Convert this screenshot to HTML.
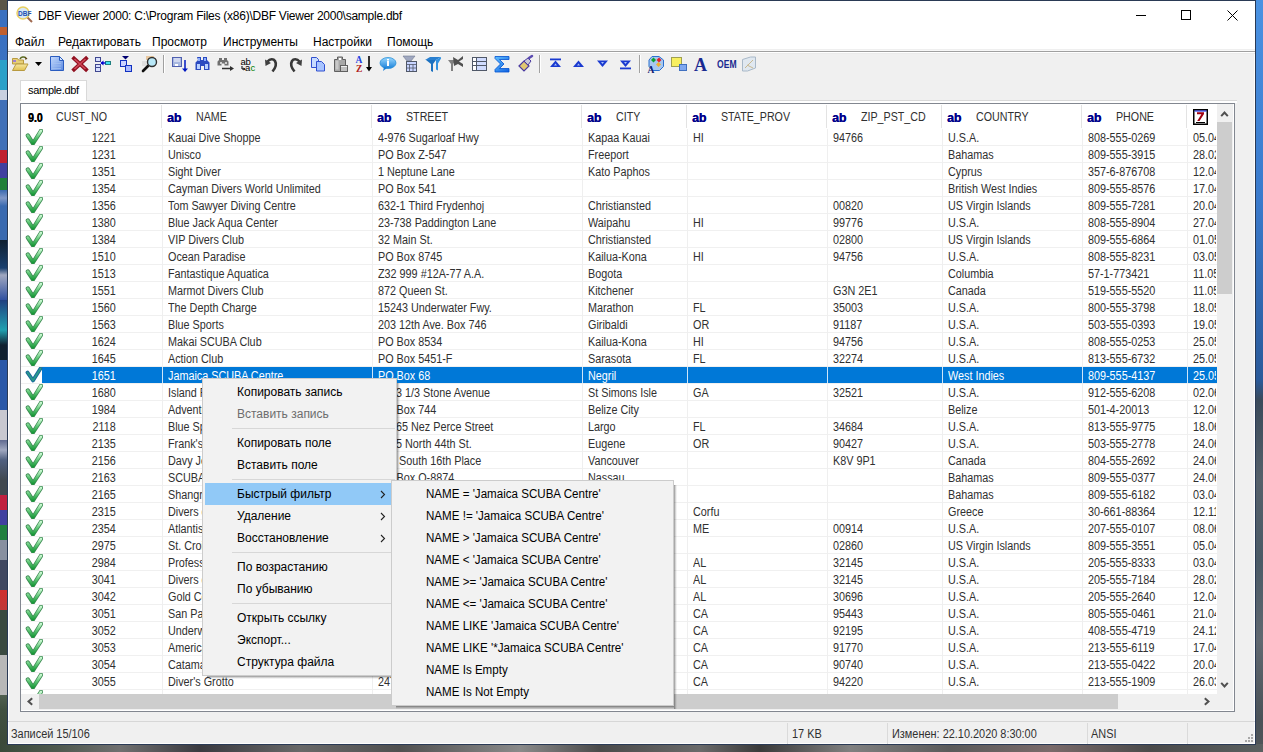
<!DOCTYPE html><html><head><meta charset="utf-8"><style>
*{box-sizing:border-box}
body{margin:0;width:1263px;height:752px;overflow:hidden;position:relative;background:#2d3035;font-family:"Liberation Sans",sans-serif;color:#000}
.a{position:absolute}
.t{position:absolute;white-space:nowrap}
.ic{position:absolute;width:16px;height:16px}
.dt{position:absolute;white-space:nowrap;font-size:12px;line-height:16px;overflow:hidden;height:16px}
.dt span{display:inline-block;transform:scaleX(0.9);transform-origin:0 0}
.dt.r span{transform-origin:100% 0}
.hd{position:absolute;white-space:nowrap;font-size:12px;line-height:16px;color:#303030;transform:scaleX(0.89);transform-origin:0 0}
.ab{position:absolute;font-weight:bold;font-size:12.5px;line-height:16px;color:#00008b;letter-spacing:-0.2px;text-shadow:0.35px 0 0 currentColor}
.mi{position:absolute;white-space:nowrap;font-size:11.5px;line-height:22px;color:#000}
</style></head><body><svg width="0" height="0" style="position:absolute"><defs><linearGradient id="gck" x1="0" y1="0" x2="0" y2="1"><stop offset="0" stop-color="#c8f8d0"/><stop offset="0.5" stop-color="#60c878"/><stop offset="1" stop-color="#189838"/></linearGradient><g id="ck"><path d="M2.8 6.5L8 14.5L16 1.8" fill="none" stroke="#3a8850" stroke-width="4.2" stroke-linejoin="round" stroke-linecap="round"/><path d="M2.8 6.5L8 14.5L16 1.8" fill="none" stroke="url(#gck)" stroke-width="2.6" stroke-linejoin="round" stroke-linecap="round"/></g><g id="cks"><path d="M2.5 5.5L8 13.5L15.5 1.5" fill="none" stroke="#1a6a9a" stroke-width="3.8" stroke-linejoin="round" stroke-linecap="round"/><path d="M2.5 5.5L8 13.5L15.5 1.5" fill="none" stroke="#2a9a8a" stroke-width="1.8" stroke-linejoin="round" stroke-linecap="round"/></g></defs></svg><div class="a" style="left:0;top:0;width:8px;height:752px;background:linear-gradient(#5a5548 0,#5a5548 10px,#3a70c0 10px,#3a70c0 27px,#c06030 27px,#c06030 35px,#3a70c0 35px,#3a72c2 60px,#2aa0c8 60px,#2aa0c8 90px,#c8d0e0 90px,#c8d0e0 100px,#4070b8 100px,#4070b8 150px,#c02030 150px,#c02030 163px,#4040a0 163px,#4040a0 178px,#20803a 178px,#20803a 190px,#3a6ab0 190px,#8098c8 198px,#3a6ab0 206px,#3a6ab0 240px,#102030 240px,#1a4070 268px,#a0a8c0 275px,#3050a0 300px,#204080 300px,#20a0b0 330px,#102030 345px,#102030 360px,#2a58a8 360px,#2a58a8 410px,#c8c8d0 410px,#c8c8d0 440px,#606a90 440px,#a0a8c0 450px,#506080 460px,#404850 480px,#404850 495px,#c02040 495px,#c02040 510px,#4040a0 510px,#4040a0 525px,#208040 525px,#208040 540px,#8890a0 540px,#8890a0 560px,#404860 560px,#404860 590px,#d03030 590px,#c03838 610px,#3a4a40 610px,#3a4a40 655px,#b8b8b8 655px,#b8b8b8 695px,#506050 695px,#405040 710px,#3a4838 752px)"></div><div class="a" style="left:1255px;top:0;width:8px;height:752px;background:linear-gradient(#4a92e2 0,#3a7acc 200px,#2a5a9a 380px,#3a4a5a 400px,#55606a 480px,#4a5a66 560px,#606870 640px,#4a5258 720px,#505558 752px)"></div><div class="a" style="left:0;top:744px;width:1263px;height:8px;background:linear-gradient(90deg,#3a4a3a 0,#505a50 60px,#707070 120px,#3a3a40 200px,#686868 300px,#505050 400px,#8a8a8a 520px,#4a4a4a 600px,#6a6a6a 700px,#3a3a3a 760px,#808080 850px,#5a5a5a 950px,#7a6a6a 1050px,#4a4a4a 1150px,#5a6060 1263px)"></div><div class="a" style="left:7px;top:0;width:1249px;height:745px;background:#2a3a55"></div><div class="a" style="left:8px;top:1px;width:1247px;height:743px;background:#f0f0f0"></div><div class="a" style="left:8px;top:1px;width:1247px;height:743px;border:1px solid #fdfdfd;border-top:none"></div><div class="a" style="left:8px;top:1px;width:1247px;height:48px;background:#fff"></div><div class="a" style="left:8px;top:49px;width:1247px;height:1px;background:#efefef"></div><div class="a" style="left:8px;top:50px;width:1247px;height:1px;background:#f8f8f8"></div><div class="a" style="left:8px;top:51px;width:1247px;height:1px;background:#a0a0a0"></div><div class="a" style="left:8px;top:52px;width:1247px;height:1px;background:#ffffff"></div><div class="a" style="left:8px;top:53px;width:1247px;height:1px;background:#ebebeb"></div><div class="t" style="left:38px;top:8px;font-size:12px;line-height:16px;letter-spacing:-0.25px">DBF Viewer 2000: C:\Program Files (x86)\DBF Viewer 2000\sample.dbf</div><svg class="a" style="left:16px;top:6px" width="18" height="18" viewBox="0 0 18 18"><line x1="10" y1="10" x2="16" y2="16" stroke="#a06a50" stroke-width="2"/><circle cx="7" cy="7" r="6" fill="#d8e8f8" stroke="#e8d060" stroke-width="1.5"/><text x="2" y="10" font-size="6.5" font-weight="bold" fill="#2050b0" font-family="Liberation Sans">DBF</text></svg><div class="a" style="left:1136px;top:15px;width:10px;height:1px;background:#000"></div><div class="a" style="left:1181px;top:10px;width:10px;height:10px;border:1px solid #000"></div><svg class="a" style="left:1227px;top:10px" width="11" height="11" viewBox="0 0 11 11"><path d="M0.5 0.5L10.5 10.5M10.5 0.5L0.5 10.5" stroke="#000" stroke-width="1"/></svg><div class="t" style="left:15px;top:34px;font-size:12px;line-height:16px">Файл</div><div class="t" style="left:58px;top:34px;font-size:12px;line-height:16px">Редактировать</div><div class="t" style="left:152px;top:34px;font-size:12px;line-height:16px">Просмотр</div><div class="t" style="left:223px;top:34px;font-size:12px;line-height:16px">Инструменты</div><div class="t" style="left:313px;top:34px;font-size:12px;line-height:16px">Настройки</div><div class="t" style="left:387px;top:34px;font-size:12px;line-height:16px">Помощь</div><svg class="a" style="left:0;top:0" width="800" height="80" viewBox="0 0 800 80"><defs><linearGradient id="gy" x1="0" y1="0" x2="0" y2="1"><stop offset="0" stop-color="#f6e7a0"/><stop offset="1" stop-color="#e0c050"/></linearGradient><linearGradient id="gb" x1="0" y1="0" x2="1" y2="1"><stop offset="0" stop-color="#c8dcff"/><stop offset="1" stop-color="#5a88e0"/></linearGradient><linearGradient id="gbl" x1="0" y1="0" x2="0" y2="1"><stop offset="0" stop-color="#9ad8ff"/><stop offset="1" stop-color="#1a80d8"/></linearGradient><linearGradient id="gsig" x1="0" y1="0" x2="1" y2="1"><stop offset="0" stop-color="#60c0ff"/><stop offset="1" stop-color="#1060e0"/></linearGradient></defs><path d="M12.5 58.5h5l1 1.5h5v4h-11z" fill="#e6cf78" stroke="#b89a40" stroke-width="1"/><path d="M12.5 70.5l3.5-6.5h12l-3.5 6.5z" fill="url(#gy)" stroke="#b89a40" stroke-width="1"/><rect x="13" y="60" width="3" height="2" fill="#a080d0"/><path d="M20 59c1-2 4-3 6-1" fill="none" stroke="#5a6a20" stroke-width="1.5"/><path d="M25 57l2.5 1.5l-2 1.5z" fill="#5a4010"/><path d="M35 62h7l-3.5 4z" fill="#000"/><path d="M50.5 56.5h9l4 4v10h-13z" fill="url(#gb)" stroke="#2a5cc0" stroke-width="1"/><path d="M52 61h9M52 63.5h9M52 66h9M52 68.5h9" stroke="#a8c4f0" stroke-width="0.7"/><path d="M59.5 56.5v4h4z" fill="#d8e8ff" stroke="#2a5cc0" stroke-width="1"/><path d="M74 58.5L86 69.5M86 58.5L74 69.5" stroke="#901020" stroke-width="3.8" stroke-linecap="square"/><path d="M74.5 59L85.5 69M85.5 59L74.5 69" stroke="#d04858" stroke-width="1.6" stroke-linecap="butt"/><rect x="95.5" y="57.5" width="5" height="4" fill="#d8e0ff" stroke="#404890"/><rect x="95.5" y="64.5" width="5" height="3" fill="#d8e0ff" stroke="#404890"/><rect x="95.5" y="67.5" width="5" height="4" fill="#d8e0ff" stroke="#404890"/><rect x="105.5" y="61.5" width="5" height="3" fill="#40e0f0" stroke="#208080"/><path d="M101 63h4.5" stroke="#0000d0" stroke-width="1.4"/><path d="M100.5 63l3-2.5v5z" fill="#0000d0"/><path d="M122 56h7l-3.5 3.5z" fill="#000070"/><rect x="120.5" y="60.5" width="6" height="6" fill="#c8d0ff" stroke="#1030c0"/><rect x="125.5" y="65.5" width="6" height="6" fill="#a8b8ff" stroke="#1030c0"/><rect x="146" y="56" width="8" height="4" fill="#e8c8a0"/><rect x="142" y="61" width="6" height="5" fill="#e0e0e0"/><path d="M143 71l5-5" stroke="#101010" stroke-width="2.6" stroke-linecap="round"/><circle cx="152" cy="62" r="4.5" fill="#b8e8f8" stroke="#303030" stroke-width="1.4"/><rect x="163" y="55" width="1" height="18" fill="#a0a0a0"/><rect x="164" y="55" width="1" height="18" fill="#ffffff"/><rect x="172.5" y="57.5" width="9" height="9" fill="#a8b8e0" stroke="#5060b0"/><rect x="174" y="58" width="6" height="4" fill="#d0d8f0"/><rect x="175" y="64" width="3" height="2" fill="#fff"/><path d="M185 60v10" stroke="#0018c0" stroke-width="1.5"/><path d="M182 68.5h6l-3 3.5z" fill="#0018c0"/><path d="M197 57h4v3h2v-3h4v3l2.5 2.5v7.5h-5.5v-4h-3v4h-5.5v-7.5l2.5-2.5z" fill="#2a4ac0"/><rect x="197" y="64" width="3" height="5" fill="#b8d0ff"/><rect x="205" y="64" width="3" height="5" fill="#b8d0ff"/><rect x="198" y="58" width="2" height="3" fill="#90b0ff"/><rect x="204" y="58" width="2" height="3" fill="#90b0ff"/><path d="M219 58h3v2h2v-2h3v2l1.5 1.5v4h-4v-2h-3v2h-4v-4l1.5-1.5z" fill="#707070"/><rect x="220" y="62" width="2" height="2" fill="#d0d0d0"/><rect x="225" y="62" width="2" height="2" fill="#d0d0d0"/><path d="M222 68.5h9" stroke="#303030" stroke-width="1.5"/><path d="M230 66l4 2.5l-4 2.5z" fill="#303030"/><text x="240.5" y="64.5" font-family="Liberation Sans" font-size="9.5" fill="#000" letter-spacing="-0.3">ab</text><path d="M242 66v3h2.5" fill="none" stroke="#000" stroke-width="1"/><path d="M243.5 67.5l2 1.5l-2 1.5z" fill="#000"/><text x="245" y="70.8" font-family="Liberation Sans" font-size="9.5" fill="#000">a</text><text x="250.5" y="70.8" font-family="Liberation Sans" font-size="9.5" fill="#008000">c</text><path d="M272.5 71.5c2.5-3 4.5-7 2.5-10.5c-1.5-2.5-5-2.5-7.5 0.5" fill="none" stroke="#383838" stroke-width="2.6"/><path d="M265 59.5l0.5 6.5l5.5-3z" fill="#404040"/><path d="M294.5 71.5c-2.5-3-4.5-7-2.5-10.5c1.5-2.5 5-2.5 7.5 0.5" fill="none" stroke="#383838" stroke-width="2.6"/><path d="M302 59.5l-0.5 6.5l-5.5-3z" fill="#404040"/><path d="M311.5 57.5h5l2 2v8h-7z" fill="#c8dcff" stroke="#3050d0"/><path d="M316.5 61.5h5l3 3v6.5h-8z" fill="#a8c4ff" stroke="#3050d0"/><path d="M334.5 59.5h3v-2.5h5v2.5h3v12h-11z" fill="#a8a8a8" stroke="#606060"/><rect x="339" y="58" width="2" height="2" fill="#fff"/><rect x="335.5" y="60.5" width="3" height="9" fill="#c8c8c8"/><rect x="340.5" y="65.5" width="7" height="6" fill="#f0f0f0" stroke="#606060"/><path d="M341 68h6M341 70h6" stroke="#909090"/><text x="355.5" y="63" font-family="Liberation Serif" font-weight="bold" font-size="9.5" fill="#2040e0">A</text><text x="356" y="71.5" font-family="Liberation Serif" font-weight="bold" font-size="9.5" fill="#b02020">Z</text><path d="M369 56v13" stroke="#000" stroke-width="1.6"/><path d="M366 67h6l-3 4.5z" fill="#000"/><ellipse cx="388" cy="63" rx="8" ry="5.5" fill="url(#gbl)" stroke="#2a90d8" stroke-width="0.8"/><path d="M384 67l-1 4l4-3z" fill="#1a80d8"/><rect x="387" y="61" width="2" height="5" fill="#fff"/><rect x="387" y="59" width="2" height="1.5" fill="#fff"/><path d="M403 56h12l-4 5h-4z" fill="#a0a8c0" stroke="#707890" stroke-width="0.6"/><rect x="406.5" y="61.5" width="10" height="10" fill="#c8d4ff" stroke="#505868"/><path d="M406.5 64.5h10M406.5 68h10M409.5 64.5v7M413 64.5v7" stroke="#505868" stroke-width="0.8"/><path d="M425 60l5-3h11l-5 3z" fill="#2a80d0"/><path d="M426 60h10l-3 4v8l-2-1v-7z" fill="#1a70c0"/><path d="M436 60l5-3v1.5l-3 5v7l-2-1z" fill="#3090e0"/><path d="M448 60h8l-3 4v7h-2v-7z" fill="#808080"/><path d="M453 57l5 3l5-4v3l-4 2.5l4 2.5v3l-5-3l-4 2z" fill="#505050"/><rect x="472.5" y="57.5" width="14" height="13" fill="#d0dcff" stroke="#505868"/><rect x="473" y="58" width="3" height="12" fill="#fff"/><path d="M472.5 61.5h14M472.5 65.5h14M476.5 57.5v13" stroke="#505868"/><path d="M495 56.5h14v3h-9.5l4.5 4.5l-4.5 4.5h9.5v3.5h-14v-2.5l5.5-5.5l-5.5-5.5z" fill="url(#gsig)" stroke="#0050d0" stroke-width="0.8"/><path d="M519 66l5-5l5 5l-5 5z" fill="#e0c870" stroke="#4a3aa0" stroke-width="1.2"/><path d="M524 61l4-3l3 3l-3 4z" fill="#c8c8d8" stroke="#4a3aa0" stroke-width="1"/><path d="M529 58l3-2" stroke="#5a4ab0" stroke-width="2.5" stroke-linecap="round"/><rect x="539" y="55" width="1" height="18" fill="#a0a0a0"/><rect x="540" y="55" width="1" height="18" fill="#ffffff"/><rect x="550" y="58.5" width="11" height="1.8" fill="#1a3ad0"/><path d="M555.5 60.5l-5.5 6.5h11z" fill="#1a3ad0"/><path d="M555.5 63.5l-1.5 2h3z" fill="#a8c0f8"/><path d="M578.5 60.5l-5.5 6.5h11z" fill="#1a3ad0"/><path d="M578.5 63.5l-1.5 2h3z" fill="#a8c0f8"/><path d="M597 60.5h11l-5.5 6.5z" fill="#1a3ad0"/><path d="M601 62h3l-1.5 2z" fill="#a8c0f8"/><path d="M620 60.5h11l-5.5 6.5z" fill="#1a3ad0"/><path d="M624 62h3l-1.5 2z" fill="#a8c0f8"/><rect x="620" y="67.5" width="11" height="1.8" fill="#1a3ad0"/><rect x="639" y="55" width="1" height="18" fill="#a0a0a0"/><rect x="640" y="55" width="1" height="18" fill="#ffffff"/><path d="M652 56.5h7l4.5 3.5v6.5l-4 4h-7l-3.5-4v-6.5z" fill="#a8c8f0" stroke="#2a70d0" stroke-width="1"/><path d="M651 60l2.5-2.5l2.5 2.5l-2.5 2.5z" fill="#10a030"/><path d="M656.5 60l2.5-2.5l2.5 2.5l-2.5 2.5z" fill="#e02030"/><path d="M656 64.5l2.5-2.5l2.5 2.5l-2.5 2.5z" fill="#f0b030"/><text x="647.5" y="72.5" font-family="Liberation Serif" font-weight="bold" font-size="9.5" fill="#101a70">A</text><rect x="671.5" y="57.5" width="10" height="9" fill="#f8f060" stroke="#a0a050"/><rect x="679.5" y="64.5" width="7" height="6" fill="#80a8f0" stroke="#4070c0"/><text x="694" y="71" font-family="Liberation Serif" font-weight="bold" font-size="18" fill="#1a2a90">A</text><text x="717" y="68.5" font-family="Liberation Sans" font-weight="bold" font-size="11" fill="#1a2a90" transform="translate(717 0) scale(0.78 1) translate(-717 0)">OEM</text><path d="M742.5 59.5l8-2.5h5v11l-8 3h-5z" fill="#e0e8f0" stroke="#a8b8c8"/><path d="M745 68l8-8M747 65l6 3" stroke="#c8b890" stroke-width="1"/></svg><div class="a" style="left:20px;top:80px;width:67px;height:22px;background:#fff;border:1px solid #d9d9d9;border-bottom:none"></div><div class="t" style="left:28px;top:82px;font-size:11px;line-height:16px;letter-spacing:-0.3px">sample.dbf</div><div class="a" style="left:87px;top:100px;width:1150px;height:1px;background:#d9d9d9"></div><div class="a" style="left:20px;top:101px;width:1217px;height:2px;background:#fff"></div><div class="a" style="left:20px;top:103px;width:1215px;height:609px;background:#828790"></div><div class="a" style="left:21px;top:104px;width:1213px;height:607px;background:#fff"></div><div class="a" style="left:161px;top:105px;width:1px;height:23px;background:#e3e3e3"></div><div class="a" style="left:371px;top:105px;width:1px;height:23px;background:#e3e3e3"></div><div class="a" style="left:581px;top:105px;width:1px;height:23px;background:#e3e3e3"></div><div class="a" style="left:686px;top:105px;width:1px;height:23px;background:#e3e3e3"></div><div class="a" style="left:826px;top:105px;width:1px;height:23px;background:#e3e3e3"></div><div class="a" style="left:941px;top:105px;width:1px;height:23px;background:#e3e3e3"></div><div class="a" style="left:1081px;top:105px;width:1px;height:23px;background:#e3e3e3"></div><div class="a" style="left:1186px;top:105px;width:1px;height:23px;background:#e3e3e3"></div><div class="a" style="left:21px;top:145px;width:1196px;height:1px;background:#f0f0f0"></div><div class="a" style="left:21px;top:162px;width:1196px;height:1px;background:#f0f0f0"></div><div class="a" style="left:21px;top:179px;width:1196px;height:1px;background:#f0f0f0"></div><div class="a" style="left:21px;top:196px;width:1196px;height:1px;background:#f0f0f0"></div><div class="a" style="left:21px;top:213px;width:1196px;height:1px;background:#f0f0f0"></div><div class="a" style="left:21px;top:230px;width:1196px;height:1px;background:#f0f0f0"></div><div class="a" style="left:21px;top:247px;width:1196px;height:1px;background:#f0f0f0"></div><div class="a" style="left:21px;top:264px;width:1196px;height:1px;background:#f0f0f0"></div><div class="a" style="left:21px;top:281px;width:1196px;height:1px;background:#f0f0f0"></div><div class="a" style="left:21px;top:298px;width:1196px;height:1px;background:#f0f0f0"></div><div class="a" style="left:21px;top:315px;width:1196px;height:1px;background:#f0f0f0"></div><div class="a" style="left:21px;top:332px;width:1196px;height:1px;background:#f0f0f0"></div><div class="a" style="left:21px;top:349px;width:1196px;height:1px;background:#f0f0f0"></div><div class="a" style="left:21px;top:366px;width:1196px;height:1px;background:#f0f0f0"></div><div class="a" style="left:21px;top:383px;width:1196px;height:1px;background:#f0f0f0"></div><div class="a" style="left:21px;top:400px;width:1196px;height:1px;background:#f0f0f0"></div><div class="a" style="left:21px;top:417px;width:1196px;height:1px;background:#f0f0f0"></div><div class="a" style="left:21px;top:434px;width:1196px;height:1px;background:#f0f0f0"></div><div class="a" style="left:21px;top:451px;width:1196px;height:1px;background:#f0f0f0"></div><div class="a" style="left:21px;top:468px;width:1196px;height:1px;background:#f0f0f0"></div><div class="a" style="left:21px;top:485px;width:1196px;height:1px;background:#f0f0f0"></div><div class="a" style="left:21px;top:502px;width:1196px;height:1px;background:#f0f0f0"></div><div class="a" style="left:21px;top:519px;width:1196px;height:1px;background:#f0f0f0"></div><div class="a" style="left:21px;top:536px;width:1196px;height:1px;background:#f0f0f0"></div><div class="a" style="left:21px;top:553px;width:1196px;height:1px;background:#f0f0f0"></div><div class="a" style="left:21px;top:570px;width:1196px;height:1px;background:#f0f0f0"></div><div class="a" style="left:21px;top:587px;width:1196px;height:1px;background:#f0f0f0"></div><div class="a" style="left:21px;top:604px;width:1196px;height:1px;background:#f0f0f0"></div><div class="a" style="left:21px;top:621px;width:1196px;height:1px;background:#f0f0f0"></div><div class="a" style="left:21px;top:638px;width:1196px;height:1px;background:#f0f0f0"></div><div class="a" style="left:21px;top:655px;width:1196px;height:1px;background:#f0f0f0"></div><div class="a" style="left:21px;top:672px;width:1196px;height:1px;background:#f0f0f0"></div><div class="a" style="left:21px;top:689px;width:1196px;height:1px;background:#f0f0f0"></div><div class="a" style="left:162px;top:129px;width:1px;height:565px;background:#efefef"></div><div class="a" style="left:372px;top:129px;width:1px;height:565px;background:#efefef"></div><div class="a" style="left:582px;top:129px;width:1px;height:565px;background:#efefef"></div><div class="a" style="left:687px;top:129px;width:1px;height:565px;background:#efefef"></div><div class="a" style="left:827px;top:129px;width:1px;height:565px;background:#efefef"></div><div class="a" style="left:942px;top:129px;width:1px;height:565px;background:#efefef"></div><div class="a" style="left:1082px;top:129px;width:1px;height:565px;background:#efefef"></div><div class="a" style="left:1187px;top:129px;width:1px;height:565px;background:#efefef"></div><div class="ab" style="left:28px;top:110px;color:#000;font-size:13.5px;transform:scaleX(0.78);transform-origin:0 0;letter-spacing:0">9.0</div><div class="hd" style="left:56px;top:109px">CUST_NO</div><div class="ab" style="left:167px;top:110px">ab</div><div class="hd" style="left:196px;top:109px">NAME</div><div class="ab" style="left:377px;top:110px">ab</div><div class="hd" style="left:406px;top:109px">STREET</div><div class="ab" style="left:587px;top:110px">ab</div><div class="hd" style="left:616px;top:109px">CITY</div><div class="ab" style="left:692px;top:110px">ab</div><div class="hd" style="left:721px;top:109px">STATE_PROV</div><div class="ab" style="left:832px;top:110px">ab</div><div class="hd" style="left:861px;top:109px">ZIP_PST_CD</div><div class="ab" style="left:947px;top:110px">ab</div><div class="hd" style="left:976px;top:109px">COUNTRY</div><div class="ab" style="left:1087px;top:110px">ab</div><div class="hd" style="left:1116px;top:109px">PHONE</div><svg class="a" style="left:1193px;top:109px" width="16" height="16" viewBox="0 0 16 16"><rect x="0.75" y="0.75" width="13.5" height="14.5" fill="#fff" stroke="#000" stroke-width="1.5"/><rect x="1.5" y="1.5" width="12" height="1" fill="#0010e0"/><path d="M4 3.2h7v1.8l-4.5 7h-2.3l4.2-6.8h-4.4z" fill="#a00010"/><rect x="3" y="13" width="9" height="1" fill="#000"/></svg><svg class="a" style="left:25px;top:129px" width="18" height="16" viewBox="0 0 18 16"><use href="#ck"/></svg><div class="dt r" style="left:56px;width:60px;text-align:right;top:130px;height:16px;color:#303030"><span>1221</span></div><div class="dt" style="left:168px;width:204px;top:130px;height:16px;color:#303030"><span>Kauai Dive Shoppe</span></div><div class="dt" style="left:378px;width:204px;top:130px;height:16px;color:#303030"><span>4-976 Sugarloaf Hwy</span></div><div class="dt" style="left:588px;width:99px;top:130px;height:16px;color:#303030"><span>Kapaa Kauai</span></div><div class="dt" style="left:693px;width:134px;top:130px;height:16px;color:#303030"><span>HI</span></div><div class="dt" style="left:833px;width:109px;top:130px;height:16px;color:#303030"><span>94766</span></div><div class="dt" style="left:948px;width:134px;top:130px;height:16px;color:#303030"><span>U.S.A.</span></div><div class="dt" style="left:1088px;width:99px;top:130px;height:16px;color:#303030"><span>808-555-0269</span></div><div class="dt" style="left:1193px;width:23px;top:130px;height:16px;color:#303030"><span>05.04.1988</span></div><svg class="a" style="left:25px;top:146px" width="18" height="16" viewBox="0 0 18 16"><use href="#ck"/></svg><div class="dt r" style="left:56px;width:60px;text-align:right;top:147px;height:16px;color:#303030"><span>1231</span></div><div class="dt" style="left:168px;width:204px;top:147px;height:16px;color:#303030"><span>Unisco</span></div><div class="dt" style="left:378px;width:204px;top:147px;height:16px;color:#303030"><span>PO Box Z-547</span></div><div class="dt" style="left:588px;width:99px;top:147px;height:16px;color:#303030"><span>Freeport</span></div><div class="dt" style="left:948px;width:134px;top:147px;height:16px;color:#303030"><span>Bahamas</span></div><div class="dt" style="left:1088px;width:99px;top:147px;height:16px;color:#303030"><span>809-555-3915</span></div><div class="dt" style="left:1193px;width:23px;top:147px;height:16px;color:#303030"><span>28.02.1989</span></div><svg class="a" style="left:25px;top:163px" width="18" height="16" viewBox="0 0 18 16"><use href="#ck"/></svg><div class="dt r" style="left:56px;width:60px;text-align:right;top:164px;height:16px;color:#303030"><span>1351</span></div><div class="dt" style="left:168px;width:204px;top:164px;height:16px;color:#303030"><span>Sight Diver</span></div><div class="dt" style="left:378px;width:204px;top:164px;height:16px;color:#303030"><span>1 Neptune Lane</span></div><div class="dt" style="left:588px;width:99px;top:164px;height:16px;color:#303030"><span>Kato Paphos</span></div><div class="dt" style="left:948px;width:134px;top:164px;height:16px;color:#303030"><span>Cyprus</span></div><div class="dt" style="left:1088px;width:99px;top:164px;height:16px;color:#303030"><span>357-6-876708</span></div><div class="dt" style="left:1193px;width:23px;top:164px;height:16px;color:#303030"><span>12.04.1988</span></div><svg class="a" style="left:25px;top:180px" width="18" height="16" viewBox="0 0 18 16"><use href="#ck"/></svg><div class="dt r" style="left:56px;width:60px;text-align:right;top:181px;height:16px;color:#303030"><span>1354</span></div><div class="dt" style="left:168px;width:204px;top:181px;height:16px;color:#303030"><span>Cayman Divers World Unlimited</span></div><div class="dt" style="left:378px;width:204px;top:181px;height:16px;color:#303030"><span>PO Box 541</span></div><div class="dt" style="left:948px;width:134px;top:181px;height:16px;color:#303030"><span>British West Indies</span></div><div class="dt" style="left:1088px;width:99px;top:181px;height:16px;color:#303030"><span>809-555-8576</span></div><div class="dt" style="left:1193px;width:23px;top:181px;height:16px;color:#303030"><span>17.04.1988</span></div><svg class="a" style="left:25px;top:197px" width="18" height="16" viewBox="0 0 18 16"><use href="#ck"/></svg><div class="dt r" style="left:56px;width:60px;text-align:right;top:198px;height:16px;color:#303030"><span>1356</span></div><div class="dt" style="left:168px;width:204px;top:198px;height:16px;color:#303030"><span>Tom Sawyer Diving Centre</span></div><div class="dt" style="left:378px;width:204px;top:198px;height:16px;color:#303030"><span>632-1 Third Frydenhoj</span></div><div class="dt" style="left:588px;width:99px;top:198px;height:16px;color:#303030"><span>Christiansted</span></div><div class="dt" style="left:833px;width:109px;top:198px;height:16px;color:#303030"><span>00820</span></div><div class="dt" style="left:948px;width:134px;top:198px;height:16px;color:#303030"><span>US Virgin Islands</span></div><div class="dt" style="left:1088px;width:99px;top:198px;height:16px;color:#303030"><span>809-555-7281</span></div><div class="dt" style="left:1193px;width:23px;top:198px;height:16px;color:#303030"><span>20.04.1988</span></div><svg class="a" style="left:25px;top:214px" width="18" height="16" viewBox="0 0 18 16"><use href="#ck"/></svg><div class="dt r" style="left:56px;width:60px;text-align:right;top:215px;height:16px;color:#303030"><span>1380</span></div><div class="dt" style="left:168px;width:204px;top:215px;height:16px;color:#303030"><span>Blue Jack Aqua Center</span></div><div class="dt" style="left:378px;width:204px;top:215px;height:16px;color:#303030"><span>23-738 Paddington Lane</span></div><div class="dt" style="left:588px;width:99px;top:215px;height:16px;color:#303030"><span>Waipahu</span></div><div class="dt" style="left:693px;width:134px;top:215px;height:16px;color:#303030"><span>HI</span></div><div class="dt" style="left:833px;width:109px;top:215px;height:16px;color:#303030"><span>99776</span></div><div class="dt" style="left:948px;width:134px;top:215px;height:16px;color:#303030"><span>U.S.A.</span></div><div class="dt" style="left:1088px;width:99px;top:215px;height:16px;color:#303030"><span>808-555-8904</span></div><div class="dt" style="left:1193px;width:23px;top:215px;height:16px;color:#303030"><span>27.04.1988</span></div><svg class="a" style="left:25px;top:231px" width="18" height="16" viewBox="0 0 18 16"><use href="#ck"/></svg><div class="dt r" style="left:56px;width:60px;text-align:right;top:232px;height:16px;color:#303030"><span>1384</span></div><div class="dt" style="left:168px;width:204px;top:232px;height:16px;color:#303030"><span>VIP Divers Club</span></div><div class="dt" style="left:378px;width:204px;top:232px;height:16px;color:#303030"><span>32 Main St.</span></div><div class="dt" style="left:588px;width:99px;top:232px;height:16px;color:#303030"><span>Christiansted</span></div><div class="dt" style="left:833px;width:109px;top:232px;height:16px;color:#303030"><span>02800</span></div><div class="dt" style="left:948px;width:134px;top:232px;height:16px;color:#303030"><span>US Virgin Islands</span></div><div class="dt" style="left:1088px;width:99px;top:232px;height:16px;color:#303030"><span>809-555-6864</span></div><div class="dt" style="left:1193px;width:23px;top:232px;height:16px;color:#303030"><span>01.05.1988</span></div><svg class="a" style="left:25px;top:248px" width="18" height="16" viewBox="0 0 18 16"><use href="#ck"/></svg><div class="dt r" style="left:56px;width:60px;text-align:right;top:249px;height:16px;color:#303030"><span>1510</span></div><div class="dt" style="left:168px;width:204px;top:249px;height:16px;color:#303030"><span>Ocean Paradise</span></div><div class="dt" style="left:378px;width:204px;top:249px;height:16px;color:#303030"><span>PO Box 8745</span></div><div class="dt" style="left:588px;width:99px;top:249px;height:16px;color:#303030"><span>Kailua-Kona</span></div><div class="dt" style="left:693px;width:134px;top:249px;height:16px;color:#303030"><span>HI</span></div><div class="dt" style="left:833px;width:109px;top:249px;height:16px;color:#303030"><span>94756</span></div><div class="dt" style="left:948px;width:134px;top:249px;height:16px;color:#303030"><span>U.S.A.</span></div><div class="dt" style="left:1088px;width:99px;top:249px;height:16px;color:#303030"><span>808-555-8231</span></div><div class="dt" style="left:1193px;width:23px;top:249px;height:16px;color:#303030"><span>03.05.1988</span></div><svg class="a" style="left:25px;top:265px" width="18" height="16" viewBox="0 0 18 16"><use href="#ck"/></svg><div class="dt r" style="left:56px;width:60px;text-align:right;top:266px;height:16px;color:#303030"><span>1513</span></div><div class="dt" style="left:168px;width:204px;top:266px;height:16px;color:#303030"><span>Fantastique Aquatica</span></div><div class="dt" style="left:378px;width:204px;top:266px;height:16px;color:#303030"><span>Z32 999 #12A-77 A.A.</span></div><div class="dt" style="left:588px;width:99px;top:266px;height:16px;color:#303030"><span>Bogota</span></div><div class="dt" style="left:948px;width:134px;top:266px;height:16px;color:#303030"><span>Columbia</span></div><div class="dt" style="left:1088px;width:99px;top:266px;height:16px;color:#303030"><span>57-1-773421</span></div><div class="dt" style="left:1193px;width:23px;top:266px;height:16px;color:#303030"><span>11.05.1988</span></div><svg class="a" style="left:25px;top:282px" width="18" height="16" viewBox="0 0 18 16"><use href="#ck"/></svg><div class="dt r" style="left:56px;width:60px;text-align:right;top:283px;height:16px;color:#303030"><span>1551</span></div><div class="dt" style="left:168px;width:204px;top:283px;height:16px;color:#303030"><span>Marmot Divers Club</span></div><div class="dt" style="left:378px;width:204px;top:283px;height:16px;color:#303030"><span>872 Queen St.</span></div><div class="dt" style="left:588px;width:99px;top:283px;height:16px;color:#303030"><span>Kitchener</span></div><div class="dt" style="left:833px;width:109px;top:283px;height:16px;color:#303030"><span>G3N 2E1</span></div><div class="dt" style="left:948px;width:134px;top:283px;height:16px;color:#303030"><span>Canada</span></div><div class="dt" style="left:1088px;width:99px;top:283px;height:16px;color:#303030"><span>519-555-5520</span></div><div class="dt" style="left:1193px;width:23px;top:283px;height:16px;color:#303030"><span>11.05.1988</span></div><svg class="a" style="left:25px;top:299px" width="18" height="16" viewBox="0 0 18 16"><use href="#ck"/></svg><div class="dt r" style="left:56px;width:60px;text-align:right;top:300px;height:16px;color:#303030"><span>1560</span></div><div class="dt" style="left:168px;width:204px;top:300px;height:16px;color:#303030"><span>The Depth Charge</span></div><div class="dt" style="left:378px;width:204px;top:300px;height:16px;color:#303030"><span>15243 Underwater Fwy.</span></div><div class="dt" style="left:588px;width:99px;top:300px;height:16px;color:#303030"><span>Marathon</span></div><div class="dt" style="left:693px;width:134px;top:300px;height:16px;color:#303030"><span>FL</span></div><div class="dt" style="left:833px;width:109px;top:300px;height:16px;color:#303030"><span>35003</span></div><div class="dt" style="left:948px;width:134px;top:300px;height:16px;color:#303030"><span>U.S.A.</span></div><div class="dt" style="left:1088px;width:99px;top:300px;height:16px;color:#303030"><span>800-555-3798</span></div><div class="dt" style="left:1193px;width:23px;top:300px;height:16px;color:#303030"><span>18.05.1988</span></div><svg class="a" style="left:25px;top:316px" width="18" height="16" viewBox="0 0 18 16"><use href="#ck"/></svg><div class="dt r" style="left:56px;width:60px;text-align:right;top:317px;height:16px;color:#303030"><span>1563</span></div><div class="dt" style="left:168px;width:204px;top:317px;height:16px;color:#303030"><span>Blue Sports</span></div><div class="dt" style="left:378px;width:204px;top:317px;height:16px;color:#303030"><span>203 12th Ave. Box 746</span></div><div class="dt" style="left:588px;width:99px;top:317px;height:16px;color:#303030"><span>Giribaldi</span></div><div class="dt" style="left:693px;width:134px;top:317px;height:16px;color:#303030"><span>OR</span></div><div class="dt" style="left:833px;width:109px;top:317px;height:16px;color:#303030"><span>91187</span></div><div class="dt" style="left:948px;width:134px;top:317px;height:16px;color:#303030"><span>U.S.A.</span></div><div class="dt" style="left:1088px;width:99px;top:317px;height:16px;color:#303030"><span>503-555-0393</span></div><div class="dt" style="left:1193px;width:23px;top:317px;height:16px;color:#303030"><span>19.05.1988</span></div><svg class="a" style="left:25px;top:333px" width="18" height="16" viewBox="0 0 18 16"><use href="#ck"/></svg><div class="dt r" style="left:56px;width:60px;text-align:right;top:334px;height:16px;color:#303030"><span>1624</span></div><div class="dt" style="left:168px;width:204px;top:334px;height:16px;color:#303030"><span>Makai SCUBA Club</span></div><div class="dt" style="left:378px;width:204px;top:334px;height:16px;color:#303030"><span>PO Box 8534</span></div><div class="dt" style="left:588px;width:99px;top:334px;height:16px;color:#303030"><span>Kailua-Kona</span></div><div class="dt" style="left:693px;width:134px;top:334px;height:16px;color:#303030"><span>HI</span></div><div class="dt" style="left:833px;width:109px;top:334px;height:16px;color:#303030"><span>94756</span></div><div class="dt" style="left:948px;width:134px;top:334px;height:16px;color:#303030"><span>U.S.A.</span></div><div class="dt" style="left:1088px;width:99px;top:334px;height:16px;color:#303030"><span>808-555-0253</span></div><div class="dt" style="left:1193px;width:23px;top:334px;height:16px;color:#303030"><span>25.05.1988</span></div><svg class="a" style="left:25px;top:350px" width="18" height="16" viewBox="0 0 18 16"><use href="#ck"/></svg><div class="dt r" style="left:56px;width:60px;text-align:right;top:351px;height:16px;color:#303030"><span>1645</span></div><div class="dt" style="left:168px;width:204px;top:351px;height:16px;color:#303030"><span>Action Club</span></div><div class="dt" style="left:378px;width:204px;top:351px;height:16px;color:#303030"><span>PO Box 5451-F</span></div><div class="dt" style="left:588px;width:99px;top:351px;height:16px;color:#303030"><span>Sarasota</span></div><div class="dt" style="left:693px;width:134px;top:351px;height:16px;color:#303030"><span>FL</span></div><div class="dt" style="left:833px;width:109px;top:351px;height:16px;color:#303030"><span>32274</span></div><div class="dt" style="left:948px;width:134px;top:351px;height:16px;color:#303030"><span>U.S.A.</span></div><div class="dt" style="left:1088px;width:99px;top:351px;height:16px;color:#303030"><span>813-555-6732</span></div><div class="dt" style="left:1193px;width:23px;top:351px;height:16px;color:#303030"><span>25.05.1988</span></div><div class="a" style="left:42px;top:367px;width:1175px;height:16px;background:#0078d7"></div><div class="a" style="left:162px;top:367px;width:1px;height:16px;background:#cfe6f9"></div><div class="a" style="left:372px;top:367px;width:1px;height:16px;background:#cfe6f9"></div><div class="a" style="left:582px;top:367px;width:1px;height:16px;background:#cfe6f9"></div><div class="a" style="left:687px;top:367px;width:1px;height:16px;background:#cfe6f9"></div><div class="a" style="left:827px;top:367px;width:1px;height:16px;background:#cfe6f9"></div><div class="a" style="left:942px;top:367px;width:1px;height:16px;background:#cfe6f9"></div><div class="a" style="left:1082px;top:367px;width:1px;height:16px;background:#cfe6f9"></div><div class="a" style="left:1187px;top:367px;width:1px;height:16px;background:#cfe6f9"></div><svg class="a" style="left:25px;top:367px" width="18" height="16" viewBox="0 0 18 16"><use href="#cks"/></svg><div class="dt r" style="left:56px;width:60px;text-align:right;top:368px;height:16px;color:#fff"><span>1651</span></div><div class="dt" style="left:168px;width:204px;top:368px;height:16px;color:#fff"><span>Jamaica SCUBA Centre</span></div><div class="dt" style="left:378px;width:204px;top:368px;height:16px;color:#fff"><span>PO Box 68</span></div><div class="dt" style="left:588px;width:99px;top:368px;height:16px;color:#fff"><span>Negril</span></div><div class="dt" style="left:948px;width:134px;top:368px;height:16px;color:#fff"><span>West Indies</span></div><div class="dt" style="left:1088px;width:99px;top:368px;height:16px;color:#fff"><span>809-555-4137</span></div><div class="dt" style="left:1193px;width:23px;top:368px;height:16px;color:#fff"><span>25.05.1988</span></div><svg class="a" style="left:25px;top:384px" width="18" height="16" viewBox="0 0 18 16"><use href="#ck"/></svg><div class="dt r" style="left:56px;width:60px;text-align:right;top:385px;height:16px;color:#303030"><span>1680</span></div><div class="dt" style="left:168px;width:204px;top:385px;height:16px;color:#303030"><span>Island Finders</span></div><div class="dt" style="left:378px;width:204px;top:385px;height:16px;color:#303030"><span>6133 1/3 Stone Avenue</span></div><div class="dt" style="left:588px;width:99px;top:385px;height:16px;color:#303030"><span>St Simons Isle</span></div><div class="dt" style="left:693px;width:134px;top:385px;height:16px;color:#303030"><span>GA</span></div><div class="dt" style="left:833px;width:109px;top:385px;height:16px;color:#303030"><span>32521</span></div><div class="dt" style="left:948px;width:134px;top:385px;height:16px;color:#303030"><span>U.S.A.</span></div><div class="dt" style="left:1088px;width:99px;top:385px;height:16px;color:#303030"><span>912-555-6208</span></div><div class="dt" style="left:1193px;width:23px;top:385px;height:16px;color:#303030"><span>02.06.1988</span></div><svg class="a" style="left:25px;top:401px" width="18" height="16" viewBox="0 0 18 16"><use href="#ck"/></svg><div class="dt r" style="left:56px;width:60px;text-align:right;top:402px;height:16px;color:#303030"><span>1984</span></div><div class="dt" style="left:168px;width:204px;top:402px;height:16px;color:#303030"><span>Adventure Undersea</span></div><div class="dt" style="left:378px;width:204px;top:402px;height:16px;color:#303030"><span>PO Box 744</span></div><div class="dt" style="left:588px;width:99px;top:402px;height:16px;color:#303030"><span>Belize City</span></div><div class="dt" style="left:948px;width:134px;top:402px;height:16px;color:#303030"><span>Belize</span></div><div class="dt" style="left:1088px;width:99px;top:402px;height:16px;color:#303030"><span>501-4-20013</span></div><div class="dt" style="left:1193px;width:23px;top:402px;height:16px;color:#303030"><span>12.06.1988</span></div><svg class="a" style="left:25px;top:418px" width="18" height="16" viewBox="0 0 18 16"><use href="#ck"/></svg><div class="dt r" style="left:56px;width:60px;text-align:right;top:419px;height:16px;color:#303030"><span>2118</span></div><div class="dt" style="left:168px;width:204px;top:419px;height:16px;color:#303030"><span>Blue Sports Club</span></div><div class="dt" style="left:378px;width:204px;top:419px;height:16px;color:#303030"><span>63365 Nez Perce Street</span></div><div class="dt" style="left:588px;width:99px;top:419px;height:16px;color:#303030"><span>Largo</span></div><div class="dt" style="left:693px;width:134px;top:419px;height:16px;color:#303030"><span>FL</span></div><div class="dt" style="left:833px;width:109px;top:419px;height:16px;color:#303030"><span>34684</span></div><div class="dt" style="left:948px;width:134px;top:419px;height:16px;color:#303030"><span>U.S.A.</span></div><div class="dt" style="left:1088px;width:99px;top:419px;height:16px;color:#303030"><span>813-555-9775</span></div><div class="dt" style="left:1193px;width:23px;top:419px;height:16px;color:#303030"><span>18.06.1988</span></div><svg class="a" style="left:25px;top:435px" width="18" height="16" viewBox="0 0 18 16"><use href="#ck"/></svg><div class="dt r" style="left:56px;width:60px;text-align:right;top:436px;height:16px;color:#303030"><span>2135</span></div><div class="dt" style="left:168px;width:204px;top:436px;height:16px;color:#303030"><span>Frank's Divers Supply</span></div><div class="dt" style="left:378px;width:204px;top:436px;height:16px;color:#303030"><span>1455 North 44th St.</span></div><div class="dt" style="left:588px;width:99px;top:436px;height:16px;color:#303030"><span>Eugene</span></div><div class="dt" style="left:693px;width:134px;top:436px;height:16px;color:#303030"><span>OR</span></div><div class="dt" style="left:833px;width:109px;top:436px;height:16px;color:#303030"><span>90427</span></div><div class="dt" style="left:948px;width:134px;top:436px;height:16px;color:#303030"><span>U.S.A.</span></div><div class="dt" style="left:1088px;width:99px;top:436px;height:16px;color:#303030"><span>503-555-2778</span></div><div class="dt" style="left:1193px;width:23px;top:436px;height:16px;color:#303030"><span>24.06.1988</span></div><svg class="a" style="left:25px;top:452px" width="18" height="16" viewBox="0 0 18 16"><use href="#ck"/></svg><div class="dt r" style="left:56px;width:60px;text-align:right;top:453px;height:16px;color:#303030"><span>2156</span></div><div class="dt" style="left:168px;width:204px;top:453px;height:16px;color:#303030"><span>Davy Jones' Locker</span></div><div class="dt" style="left:378px;width:204px;top:453px;height:16px;color:#303030"><span>246 South 16th Place</span></div><div class="dt" style="left:588px;width:99px;top:453px;height:16px;color:#303030"><span>Vancouver</span></div><div class="dt" style="left:833px;width:109px;top:453px;height:16px;color:#303030"><span>K8V 9P1</span></div><div class="dt" style="left:948px;width:134px;top:453px;height:16px;color:#303030"><span>Canada</span></div><div class="dt" style="left:1088px;width:99px;top:453px;height:16px;color:#303030"><span>804-555-2692</span></div><div class="dt" style="left:1193px;width:23px;top:453px;height:16px;color:#303030"><span>24.06.1988</span></div><svg class="a" style="left:25px;top:469px" width="18" height="16" viewBox="0 0 18 16"><use href="#ck"/></svg><div class="dt r" style="left:56px;width:60px;text-align:right;top:470px;height:16px;color:#303030"><span>2163</span></div><div class="dt" style="left:168px;width:204px;top:470px;height:16px;color:#303030"><span>SCUBA Heaven</span></div><div class="dt" style="left:378px;width:204px;top:470px;height:16px;color:#303030"><span>PO Box Q-8874</span></div><div class="dt" style="left:588px;width:99px;top:470px;height:16px;color:#303030"><span>Nassau</span></div><div class="dt" style="left:948px;width:134px;top:470px;height:16px;color:#303030"><span>Bahamas</span></div><div class="dt" style="left:1088px;width:99px;top:470px;height:16px;color:#303030"><span>809-555-0377</span></div><div class="dt" style="left:1193px;width:23px;top:470px;height:16px;color:#303030"><span>24.06.1988</span></div><svg class="a" style="left:25px;top:486px" width="18" height="16" viewBox="0 0 18 16"><use href="#ck"/></svg><div class="dt r" style="left:56px;width:60px;text-align:right;top:487px;height:16px;color:#303030"><span>2165</span></div><div class="dt" style="left:168px;width:204px;top:487px;height:16px;color:#303030"><span>Shangri-La Sports Center</span></div><div class="dt" style="left:378px;width:204px;top:487px;height:16px;color:#303030"><span>PO Box D-5495</span></div><div class="dt" style="left:588px;width:99px;top:487px;height:16px;color:#303030"><span>Freeport</span></div><div class="dt" style="left:948px;width:134px;top:487px;height:16px;color:#303030"><span>Bahamas</span></div><div class="dt" style="left:1088px;width:99px;top:487px;height:16px;color:#303030"><span>809-555-6182</span></div><div class="dt" style="left:1193px;width:23px;top:487px;height:16px;color:#303030"><span>03.04.1988</span></div><svg class="a" style="left:25px;top:503px" width="18" height="16" viewBox="0 0 18 16"><use href="#ck"/></svg><div class="dt r" style="left:56px;width:60px;text-align:right;top:504px;height:16px;color:#303030"><span>2315</span></div><div class="dt" style="left:168px;width:204px;top:504px;height:16px;color:#303030"><span>Divers of Corfu, Inc.</span></div><div class="dt" style="left:378px;width:204px;top:504px;height:16px;color:#303030"><span>Marmoset Place 54</span></div><div class="dt" style="left:588px;width:99px;top:504px;height:16px;color:#303030"><span>Ayios Matthaios</span></div><div class="dt" style="left:693px;width:134px;top:504px;height:16px;color:#303030"><span>Corfu</span></div><div class="dt" style="left:948px;width:134px;top:504px;height:16px;color:#303030"><span>Greece</span></div><div class="dt" style="left:1088px;width:99px;top:504px;height:16px;color:#303030"><span>30-661-88364</span></div><div class="dt" style="left:1193px;width:23px;top:504px;height:16px;color:#303030"><span>12.11.1988</span></div><svg class="a" style="left:25px;top:520px" width="18" height="16" viewBox="0 0 18 16"><use href="#ck"/></svg><div class="dt r" style="left:56px;width:60px;text-align:right;top:521px;height:16px;color:#303030"><span>2354</span></div><div class="dt" style="left:168px;width:204px;top:521px;height:16px;color:#303030"><span>Atlantis Divers</span></div><div class="dt" style="left:378px;width:204px;top:521px;height:16px;color:#303030"><span>1 Neptune Lane</span></div><div class="dt" style="left:588px;width:99px;top:521px;height:16px;color:#303030"><span>Kato Paphos</span></div><div class="dt" style="left:693px;width:134px;top:521px;height:16px;color:#303030"><span>ME</span></div><div class="dt" style="left:833px;width:109px;top:521px;height:16px;color:#303030"><span>00914</span></div><div class="dt" style="left:948px;width:134px;top:521px;height:16px;color:#303030"><span>U.S.A.</span></div><div class="dt" style="left:1088px;width:99px;top:521px;height:16px;color:#303030"><span>207-555-0107</span></div><div class="dt" style="left:1193px;width:23px;top:521px;height:16px;color:#303030"><span>08.06.1988</span></div><svg class="a" style="left:25px;top:537px" width="18" height="16" viewBox="0 0 18 16"><use href="#ck"/></svg><div class="dt r" style="left:56px;width:60px;text-align:right;top:538px;height:16px;color:#303030"><span>2975</span></div><div class="dt" style="left:168px;width:204px;top:538px;height:16px;color:#303030"><span>St. Croix Dive Center</span></div><div class="dt" style="left:378px;width:204px;top:538px;height:16px;color:#303030"><span>PO Box 1234</span></div><div class="dt" style="left:588px;width:99px;top:538px;height:16px;color:#303030"><span>Christiansted</span></div><div class="dt" style="left:833px;width:109px;top:538px;height:16px;color:#303030"><span>02860</span></div><div class="dt" style="left:948px;width:134px;top:538px;height:16px;color:#303030"><span>US Virgin Islands</span></div><div class="dt" style="left:1088px;width:99px;top:538px;height:16px;color:#303030"><span>809-555-3551</span></div><div class="dt" style="left:1193px;width:23px;top:538px;height:16px;color:#303030"><span>05.04.1988</span></div><svg class="a" style="left:25px;top:554px" width="18" height="16" viewBox="0 0 18 16"><use href="#ck"/></svg><div class="dt r" style="left:56px;width:60px;text-align:right;top:555px;height:16px;color:#303030"><span>2984</span></div><div class="dt" style="left:168px;width:204px;top:555px;height:16px;color:#303030"><span>Professional Divers, Ltd.</span></div><div class="dt" style="left:378px;width:204px;top:555px;height:16px;color:#303030"><span>4734 Melinda St.</span></div><div class="dt" style="left:588px;width:99px;top:555px;height:16px;color:#303030"><span>Hoover</span></div><div class="dt" style="left:693px;width:134px;top:555px;height:16px;color:#303030"><span>AL</span></div><div class="dt" style="left:833px;width:109px;top:555px;height:16px;color:#303030"><span>32145</span></div><div class="dt" style="left:948px;width:134px;top:555px;height:16px;color:#303030"><span>U.S.A.</span></div><div class="dt" style="left:1088px;width:99px;top:555px;height:16px;color:#303030"><span>205-555-8333</span></div><div class="dt" style="left:1193px;width:23px;top:555px;height:16px;color:#303030"><span>03.04.1988</span></div><svg class="a" style="left:25px;top:571px" width="18" height="16" viewBox="0 0 18 16"><use href="#ck"/></svg><div class="dt r" style="left:56px;width:60px;text-align:right;top:572px;height:16px;color:#303030"><span>3041</span></div><div class="dt" style="left:168px;width:204px;top:572px;height:16px;color:#303030"><span>Divers of Blue-green</span></div><div class="dt" style="left:378px;width:204px;top:572px;height:16px;color:#303030"><span>634 Complex Ave.</span></div><div class="dt" style="left:588px;width:99px;top:572px;height:16px;color:#303030"><span>Pelham</span></div><div class="dt" style="left:693px;width:134px;top:572px;height:16px;color:#303030"><span>AL</span></div><div class="dt" style="left:833px;width:109px;top:572px;height:16px;color:#303030"><span>32145</span></div><div class="dt" style="left:948px;width:134px;top:572px;height:16px;color:#303030"><span>U.S.A.</span></div><div class="dt" style="left:1088px;width:99px;top:572px;height:16px;color:#303030"><span>205-555-7184</span></div><div class="dt" style="left:1193px;width:23px;top:572px;height:16px;color:#303030"><span>28.02.1989</span></div><svg class="a" style="left:25px;top:588px" width="18" height="16" viewBox="0 0 18 16"><use href="#ck"/></svg><div class="dt r" style="left:56px;width:60px;text-align:right;top:589px;height:16px;color:#303030"><span>3042</span></div><div class="dt" style="left:168px;width:204px;top:589px;height:16px;color:#303030"><span>Gold Coast Supply</span></div><div class="dt" style="left:378px;width:204px;top:589px;height:16px;color:#303030"><span>223-B Houston Place</span></div><div class="dt" style="left:588px;width:99px;top:589px;height:16px;color:#303030"><span>Mobile</span></div><div class="dt" style="left:693px;width:134px;top:589px;height:16px;color:#303030"><span>AL</span></div><div class="dt" style="left:833px;width:109px;top:589px;height:16px;color:#303030"><span>30696</span></div><div class="dt" style="left:948px;width:134px;top:589px;height:16px;color:#303030"><span>U.S.A.</span></div><div class="dt" style="left:1088px;width:99px;top:589px;height:16px;color:#303030"><span>205-555-2640</span></div><div class="dt" style="left:1193px;width:23px;top:589px;height:16px;color:#303030"><span>12.04.1988</span></div><svg class="a" style="left:25px;top:605px" width="18" height="16" viewBox="0 0 18 16"><use href="#ck"/></svg><div class="dt r" style="left:56px;width:60px;text-align:right;top:606px;height:16px;color:#303030"><span>3051</span></div><div class="dt" style="left:168px;width:204px;top:606px;height:16px;color:#303030"><span>San Pablo Dive Center</span></div><div class="dt" style="left:378px;width:204px;top:606px;height:16px;color:#303030"><span>1701-D N Broadway</span></div><div class="dt" style="left:588px;width:99px;top:606px;height:16px;color:#303030"><span>Santa Maria</span></div><div class="dt" style="left:693px;width:134px;top:606px;height:16px;color:#303030"><span>CA</span></div><div class="dt" style="left:833px;width:109px;top:606px;height:16px;color:#303030"><span>95443</span></div><div class="dt" style="left:948px;width:134px;top:606px;height:16px;color:#303030"><span>U.S.A.</span></div><div class="dt" style="left:1088px;width:99px;top:606px;height:16px;color:#303030"><span>805-555-0461</span></div><div class="dt" style="left:1193px;width:23px;top:606px;height:16px;color:#303030"><span>21.04.1988</span></div><svg class="a" style="left:25px;top:622px" width="18" height="16" viewBox="0 0 18 16"><use href="#ck"/></svg><div class="dt r" style="left:56px;width:60px;text-align:right;top:623px;height:16px;color:#303030"><span>3052</span></div><div class="dt" style="left:168px;width:204px;top:623px;height:16px;color:#303030"><span>Underwater Sports Co.</span></div><div class="dt" style="left:378px;width:204px;top:623px;height:16px;color:#303030"><span>351 B Pacific Blvd.</span></div><div class="dt" style="left:588px;width:99px;top:623px;height:16px;color:#303030"><span>San Jose</span></div><div class="dt" style="left:693px;width:134px;top:623px;height:16px;color:#303030"><span>CA</span></div><div class="dt" style="left:833px;width:109px;top:623px;height:16px;color:#303030"><span>92195</span></div><div class="dt" style="left:948px;width:134px;top:623px;height:16px;color:#303030"><span>U.S.A.</span></div><div class="dt" style="left:1088px;width:99px;top:623px;height:16px;color:#303030"><span>408-555-4719</span></div><div class="dt" style="left:1193px;width:23px;top:623px;height:16px;color:#303030"><span>24.12.1988</span></div><svg class="a" style="left:25px;top:639px" width="18" height="16" viewBox="0 0 18 16"><use href="#ck"/></svg><div class="dt r" style="left:56px;width:60px;text-align:right;top:640px;height:16px;color:#303030"><span>3053</span></div><div class="dt" style="left:168px;width:204px;top:640px;height:16px;color:#303030"><span>American SCUBA Supply</span></div><div class="dt" style="left:378px;width:204px;top:640px;height:16px;color:#303030"><span>1739 Atlantic Avenue</span></div><div class="dt" style="left:588px;width:99px;top:640px;height:16px;color:#303030"><span>Lomita</span></div><div class="dt" style="left:693px;width:134px;top:640px;height:16px;color:#303030"><span>CA</span></div><div class="dt" style="left:833px;width:109px;top:640px;height:16px;color:#303030"><span>91770</span></div><div class="dt" style="left:948px;width:134px;top:640px;height:16px;color:#303030"><span>U.S.A.</span></div><div class="dt" style="left:1088px;width:99px;top:640px;height:16px;color:#303030"><span>213-555-6119</span></div><div class="dt" style="left:1193px;width:23px;top:640px;height:16px;color:#303030"><span>17.04.1988</span></div><svg class="a" style="left:25px;top:656px" width="18" height="16" viewBox="0 0 18 16"><use href="#ck"/></svg><div class="dt r" style="left:56px;width:60px;text-align:right;top:657px;height:16px;color:#303030"><span>3054</span></div><div class="dt" style="left:168px;width:204px;top:657px;height:16px;color:#303030"><span>Catamaran Dive Club</span></div><div class="dt" style="left:378px;width:204px;top:657px;height:16px;color:#303030"><span>Box 264 Pleasure Point</span></div><div class="dt" style="left:588px;width:99px;top:657px;height:16px;color:#303030"><span>Catalina Island</span></div><div class="dt" style="left:693px;width:134px;top:657px;height:16px;color:#303030"><span>CA</span></div><div class="dt" style="left:833px;width:109px;top:657px;height:16px;color:#303030"><span>90740</span></div><div class="dt" style="left:948px;width:134px;top:657px;height:16px;color:#303030"><span>U.S.A.</span></div><div class="dt" style="left:1088px;width:99px;top:657px;height:16px;color:#303030"><span>213-555-0422</span></div><div class="dt" style="left:1193px;width:23px;top:657px;height:16px;color:#303030"><span>20.04.1988</span></div><svg class="a" style="left:25px;top:673px" width="18" height="16" viewBox="0 0 18 16"><use href="#ck"/></svg><div class="dt r" style="left:56px;width:60px;text-align:right;top:674px;height:16px;color:#303030"><span>3055</span></div><div class="dt" style="left:168px;width:204px;top:674px;height:16px;color:#303030"><span>Diver's Grotto</span></div><div class="dt" style="left:378px;width:204px;top:674px;height:16px;color:#303030"><span>24701 Moana Drive</span></div><div class="dt" style="left:588px;width:99px;top:674px;height:16px;color:#303030"><span>Santa Monica</span></div><div class="dt" style="left:693px;width:134px;top:674px;height:16px;color:#303030"><span>CA</span></div><div class="dt" style="left:833px;width:109px;top:674px;height:16px;color:#303030"><span>94220</span></div><div class="dt" style="left:948px;width:134px;top:674px;height:16px;color:#303030"><span>U.S.A.</span></div><div class="dt" style="left:1088px;width:99px;top:674px;height:16px;color:#303030"><span>213-555-1909</span></div><div class="dt" style="left:1193px;width:23px;top:674px;height:16px;color:#303030"><span>26.03.1988</span></div><svg class="a" style="left:25px;top:690px" width="18" height="4" viewBox="0 0 18 4"><use href="#ck"/></svg><div class="dt r" style="left:56px;width:60px;text-align:right;top:691px;height:4px;color:#303030"><span>3100</span></div><div class="dt" style="left:168px;width:204px;top:691px;height:4px;color:#303030"><span>Fisherman's Eye</span></div><div class="dt" style="left:378px;width:204px;top:691px;height:4px;color:#303030"><span>PO Box 7542</span></div><div class="dt" style="left:588px;width:99px;top:691px;height:4px;color:#303030"><span>Grand Cayman</span></div><div class="dt" style="left:948px;width:134px;top:691px;height:4px;color:#303030"><span>British West Indies</span></div><div class="dt" style="left:1088px;width:99px;top:691px;height:4px;color:#303030"><span>809-555-4680</span></div><div class="dt" style="left:1193px;width:23px;top:691px;height:4px;color:#303030"><span>03.04.1988</span></div><div class="a" style="left:1217px;top:104px;width:16px;height:590px;background:#f0f0f0"></div><div class="a" style="left:1217px;top:122px;width:15px;height:172px;background:#cdcdcd"></div><svg class="a" style="left:1220px;top:110px" width="10" height="8" viewBox="0 0 10 8"><path d="M1.2 6.2L4.5 2.5L7.8 6.2" fill="none" stroke="#505050" stroke-width="2"/></svg><svg class="a" style="left:1220px;top:681px" width="10" height="8" viewBox="0 0 10 8"><path d="M1.2 1.8L4.5 5.5L7.8 1.8" fill="none" stroke="#505050" stroke-width="2"/></svg><div class="a" style="left:21px;top:694px;width:1212px;height:16px;background:#f0f0f0"></div><div class="a" style="left:39px;top:694px;width:1079px;height:15px;background:#cdcdcd"></div><svg class="a" style="left:26px;top:697px" width="8" height="10" viewBox="0 0 8 10"><path d="M6.2 1.2L2.5 4.5L6.2 7.8" fill="none" stroke="#505050" stroke-width="2"/></svg><svg class="a" style="left:1203px;top:697px" width="8" height="10" viewBox="0 0 8 10"><path d="M1.8 1.2L5.5 4.5L1.8 7.8" fill="none" stroke="#505050" stroke-width="2"/></svg><div class="a" style="left:21px;top:710px;width:1213px;height:1px;background:#fff"></div><div class="a" style="left:8px;top:721px;width:1247px;height:1px;background:#d7d7d7"></div><div class="a" style="left:787px;top:723px;width:1px;height:21px;background:#dadada"></div><div class="a" style="left:887px;top:723px;width:1px;height:21px;background:#dadada"></div><div class="a" style="left:1087px;top:723px;width:1px;height:21px;background:#dadada"></div><div class="a" style="left:1187px;top:723px;width:1px;height:21px;background:#dadada"></div><div class="t" style="left:11px;top:726px;font-size:12px;line-height:16px;color:#303030;transform:scaleX(0.91);transform-origin:0 0">Записей 15/106</div><div class="t" style="left:792px;top:726px;font-size:12px;line-height:16px;color:#303030;transform:scaleX(0.91);transform-origin:0 0">17 KB</div><div class="t" style="left:892px;top:726px;font-size:12px;line-height:16px;color:#303030;transform:scaleX(0.91);transform-origin:0 0">Изменен: 22.10.2020 8:30:00</div><div class="t" style="left:1091px;top:726px;font-size:12px;line-height:16px;color:#303030;transform:scaleX(0.91);transform-origin:0 0">ANSI</div><div class="a" style="left:1251px;top:734px;width:2px;height:2px;background:#a8a8a8"></div><div class="a" style="left:1248px;top:737px;width:2px;height:2px;background:#a8a8a8"></div><div class="a" style="left:1251px;top:737px;width:2px;height:2px;background:#a8a8a8"></div><div class="a" style="left:1245px;top:740px;width:2px;height:2px;background:#a8a8a8"></div><div class="a" style="left:1248px;top:740px;width:2px;height:2px;background:#a8a8a8"></div><div class="a" style="left:1251px;top:740px;width:2px;height:2px;background:#a8a8a8"></div><div class="a" style="left:397px;top:383px;width:3px;height:296px;background:linear-gradient(90deg,rgba(0,0,0,.42),rgba(0,0,0,.12) 60%,rgba(0,0,0,0))"></div><div class="a" style="left:207px;top:676px;width:190px;height:3px;background:linear-gradient(rgba(0,0,0,.42),rgba(0,0,0,.12) 60%,rgba(0,0,0,0))"></div><div class="a" style="left:202px;top:378px;width:195px;height:298px;background:#f2f2f2;border:1px solid #cccccc"></div><div class="mi" style="left:237px;top:381px;color:#000;font-size:12px">Копировать запись</div><div class="mi" style="left:237px;top:403px;color:#6d6d6d;font-size:12px">Вставить запись</div><div class="a" style="left:232px;top:428px;width:163px;height:1px;background:#d7d7d7"></div><div class="mi" style="left:237px;top:432px;color:#000;font-size:12px">Копировать поле</div><div class="mi" style="left:237px;top:454px;color:#000;font-size:12px">Вставить поле</div><div class="a" style="left:232px;top:479px;width:163px;height:1px;background:#d7d7d7"></div><div class="a" style="left:205px;top:483px;width:190px;height:22px;background:#91c9f7"></div><div class="mi" style="left:237px;top:483px;color:#000;font-size:12px">Быстрый фильтр</div><svg class="a" style="left:380px;top:490px" width="6" height="9" viewBox="0 0 6 9"><path d="M1 1L4.5 4.5L1 8" fill="none" stroke="#222" stroke-width="1.1"/></svg><div class="mi" style="left:237px;top:505px;color:#000;font-size:12px">Удаление</div><svg class="a" style="left:380px;top:512px" width="6" height="9" viewBox="0 0 6 9"><path d="M1 1L4.5 4.5L1 8" fill="none" stroke="#222" stroke-width="1.1"/></svg><div class="mi" style="left:237px;top:527px;color:#000;font-size:12px">Восстановление</div><svg class="a" style="left:380px;top:534px" width="6" height="9" viewBox="0 0 6 9"><path d="M1 1L4.5 4.5L1 8" fill="none" stroke="#222" stroke-width="1.1"/></svg><div class="a" style="left:232px;top:552px;width:163px;height:1px;background:#d7d7d7"></div><div class="mi" style="left:237px;top:556px;color:#000;font-size:12px">По возрастанию</div><div class="mi" style="left:237px;top:578px;color:#000;font-size:12px">По убыванию</div><div class="a" style="left:232px;top:603px;width:163px;height:1px;background:#d7d7d7"></div><div class="mi" style="left:237px;top:607px;color:#000;font-size:12px">Открыть ссылку</div><div class="mi" style="left:237px;top:629px;color:#000;font-size:12px">Экспорт...</div><div class="mi" style="left:237px;top:651px;color:#000;font-size:12px">Структура файла</div><div class="a" style="left:674px;top:485px;width:3px;height:224px;background:linear-gradient(90deg,rgba(0,0,0,.42),rgba(0,0,0,.12) 60%,rgba(0,0,0,0))"></div><div class="a" style="left:396px;top:706px;width:278px;height:3px;background:linear-gradient(rgba(0,0,0,.42),rgba(0,0,0,.12) 60%,rgba(0,0,0,0))"></div><div class="a" style="left:391px;top:480px;width:283px;height:226px;background:#f2f2f2;border:1px solid #cccccc"></div><div class="mi" style="left:426px;top:483px;font-size:12px;transform:scaleX(0.965);transform-origin:0 0">NAME = 'Jamaica SCUBA Centre'</div><div class="mi" style="left:426px;top:505px;font-size:12px;transform:scaleX(0.965);transform-origin:0 0">NAME != 'Jamaica SCUBA Centre'</div><div class="mi" style="left:426px;top:527px;font-size:12px;transform:scaleX(0.965);transform-origin:0 0">NAME &gt; 'Jamaica SCUBA Centre'</div><div class="mi" style="left:426px;top:549px;font-size:12px;transform:scaleX(0.965);transform-origin:0 0">NAME &lt; 'Jamaica SCUBA Centre'</div><div class="mi" style="left:426px;top:571px;font-size:12px;transform:scaleX(0.965);transform-origin:0 0">NAME &gt;= 'Jamaica SCUBA Centre'</div><div class="mi" style="left:426px;top:593px;font-size:12px;transform:scaleX(0.965);transform-origin:0 0">NAME &lt;= 'Jamaica SCUBA Centre'</div><div class="mi" style="left:426px;top:615px;font-size:12px;transform:scaleX(0.965);transform-origin:0 0">NAME LIKE 'Jamaica SCUBA Centre'</div><div class="mi" style="left:426px;top:637px;font-size:12px;transform:scaleX(0.965);transform-origin:0 0">NAME LIKE '*Jamaica SCUBA Centre'</div><div class="mi" style="left:426px;top:659px;font-size:12px;transform:scaleX(0.965);transform-origin:0 0">NAME Is Empty</div><div class="mi" style="left:426px;top:681px;font-size:12px;transform:scaleX(0.965);transform-origin:0 0">NAME Is Not Empty</div></body></html>
